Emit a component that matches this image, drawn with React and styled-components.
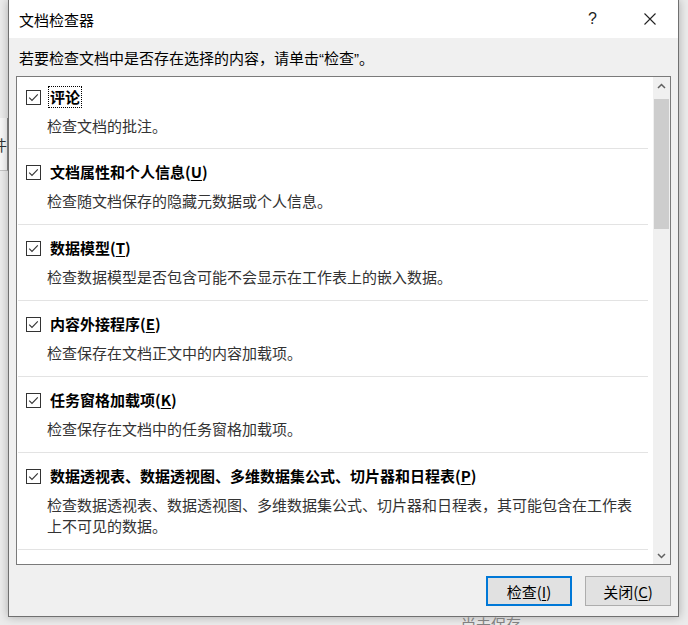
import React from "react";
import styled, { createGlobalStyle } from "styled-components";

const GlobalStyle = createGlobalStyle`
  html, body {
    margin: 0;
    padding: 0;
    background: #e9e9e9;
  }
  body {
    font-family: "Noto Sans CJK SC", "Microsoft YaHei", "Liberation Sans", sans-serif;
  }
`;

const Screen = styled.div`
  width: 688px;
  height: 625px;
  overflow: hidden;
  display: grid;
  grid-template-columns: 8px 671px 1fr;
  grid-template-rows: 617px 8px;
  background: #ebebeb;
`;

const LeftStrip = styled.div`
  grid-column: 1;
  grid-row: 1;
  background: #ececec;
  padding-top: 118px;
`;

const BackTab = styled.div`
  height: 52px;
  display: flex;
  justify-content: flex-end;
  align-items: center;
  overflow: hidden;
  background: #f8f8f8;
  border-right: 1px solid #8a8a8a;
  border-bottom: 1px solid #c4c4c4;
  color: #333;
  font-size: 15px;
  white-space: nowrap;
`;

const BottomStrip = styled.div`
  grid-column: 1 / 4;
  grid-row: 2;
  overflow: hidden;
  padding-left: 461px;
  color: #808080;
  font-size: 15px;
  line-height: 13px;
  white-space: nowrap;
`;

const Dialog = styled.div`
  grid-column: 2;
  grid-row: 1;
  display: flex;
  flex-direction: column;
  background: #f0f0f0;
  border: 1px solid #707070;
  border-top: none;
  box-shadow: 0 0 9px rgba(0, 0, 0, 0.28);
`;

const TitleBar = styled.div`
  height: 38px;
  flex: none;
  display: flex;
  align-items: center;
  background: #ffffff;
  padding: 0 22px 0 10px;
`;

const Title = styled.div`
  flex: 1;
  font-size: 15px;
  color: #000;
`;

const HelpMark = styled.div`
  font-family: "Liberation Sans", sans-serif;
  font-size: 16px;
  color: #222;
  margin-right: 47px;
`;

const CloseMark = styled.svg`
  display: block;
`;

const Body = styled.div`
  flex: 1;
  display: flex;
  flex-direction: column;
  padding: 9px 7px 11px 7px;
  min-height: 0;
`;

const Hint = styled.div`
  font-size: 15px;
  line-height: 22px;
  color: #000;
  padding-left: 3px;
  margin-bottom: 6px;
`;

const Quote = styled.span`
  font-family: "Liberation Sans", sans-serif;
`;

const ListBox = styled.div`
  height: 489px;
  box-sizing: border-box;
  flex: none;
  display: grid;
  grid-template-columns: 1fr 17px;
  background: #ffffff;
  border: 1px solid #7a7a7a;
  overflow: hidden;
`;

const Items = styled.div`
  overflow: hidden;
`;

const Item = styled.div`
  margin: 0 5px 0 1px;
  padding: ${(p) => (p.$first ? "9px 0 12px 8px" : "12px 0 13px 8px")};
  border-bottom: 1px solid #e3e3e3;
  height: ${(p) => (p.$empty ? "40px" : "auto")};
`;

const TitleRow = styled.div`
  display: flex;
  align-items: center;
  height: 22px;
  gap: 9px;
`;

const ItemTitle = styled.span`
  font-size: 15px;
  font-weight: 700;
  line-height: 20px;
  color: #000;
  white-space: nowrap;
  padding: 0 1px;
  margin-left: -1px;
  outline: ${(p) => (p.$focus ? "1px dotted #000" : "none")};
`;

const Key = styled.span`
  text-decoration: underline;
  text-underline-offset: 2px;
`;

const Desc = styled.div`
  margin-top: 7px;
  padding-left: 21px;
  max-width: 590px;
  font-size: 15px;
  line-height: 21px;
  color: #333;
`;

const ScrollBar = styled.div`
  display: flex;
  flex-direction: column;
  background: #f0f0f0;
`;

const ArrowBtn = styled.div`
  height: 17px;
  flex: none;
  display: flex;
  align-items: center;
  justify-content: center;
`;

const Thumb = styled.div`
  margin: 5px 1px 0 1px;
  height: 130px;
  background: #cdcdcd;
`;

const Track = styled.div`
  flex: 1;
`;

const Footer = styled.div`
  display: flex;
  justify-content: flex-end;
  gap: 13px;
  margin-top: 11px;
`;

const Button = styled.button`
  width: 86px;
  height: 30px;
  box-sizing: border-box;
  font-family: inherit;
  font-size: 15px;
  color: #000;
  background: #e1e1e1;
  border: ${(p) => (p.$primary ? "2px solid #0078d7" : "1px solid #adadad")};
  padding: 0;
  cursor: default;
`;

function CheckBox() {
  return (
    <svg width="15" height="15" viewBox="0 0 15 15" style={{ flex: "none" }}>
      <rect x="0.5" y="0.5" width="14" height="14" fill="#fff" stroke="#333" />
      <path d="M3.2 7.6 L6 10.4 L11.8 4.4" fill="none" stroke="#333" strokeWidth="1.1" />
    </svg>
  );
}

function Chevron({ up }) {
  return (
    <svg width="9" height="6" viewBox="0 0 9 6">
      <path
        d={up ? "M1 5 L4.5 1.5 L8 5" : "M1 1 L4.5 4.5 L8 1"}
        fill="none"
        stroke="#606060"
        strokeWidth="1.5"
      />
    </svg>
  );
}

const items = [
  { title: "评论", key: null, desc: "检查文档的批注。" },
  { title: "文档属性和个人信息", key: "U", desc: "检查随文档保存的隐藏元数据或个人信息。" },
  { title: "数据模型", key: "T", desc: "检查数据模型是否包含可能不会显示在工作表上的嵌入数据。" },
  { title: "内容外接程序", key: "E", desc: "检查保存在文档正文中的内容加载项。" },
  { title: "任务窗格加载项", key: "K", desc: "检查保存在文档中的任务窗格加载项。" },
  {
    title: "数据透视表、数据透视图、多维数据集公式、切片器和日程表",
    key: "P",
    desc: "检查数据透视表、数据透视图、多维数据集公式、切片器和日程表，其可能包含在工作表上不可见的数据。",
  },
];

export default function App() {
  return (
    <>
      <GlobalStyle />
      <Screen>
        <LeftStrip>
          <BackTab>文件</BackTab>
        </LeftStrip>
        <Dialog>
          <TitleBar>
            <Title>文档检查器</Title>
            <HelpMark>?</HelpMark>
            <CloseMark width="12" height="12" viewBox="0 0 12 12">
              <path d="M0.5 0.5 L11.5 11.5 M11.5 0.5 L0.5 11.5" stroke="#222" strokeWidth="1.1" />
            </CloseMark>
          </TitleBar>
          <Body>
            <Hint>
              若要检查文档中是否存在选择的内容，请单击<Quote>“</Quote>检查<Quote>”</Quote>。
            </Hint>
            <ListBox>
              <Items>
                {items.map((it, i) => (
                  <Item key={it.title} $first={i === 0}>
                    <TitleRow>
                      <CheckBox />
                      <ItemTitle $focus={i === 0}>
                        {it.title}
                        {it.key && (
                          <>
                            (<Key>{it.key}</Key>)
                          </>
                        )}
                      </ItemTitle>
                    </TitleRow>
                    <Desc>{it.desc}</Desc>
                  </Item>
                ))}
                <Item $empty />
              </Items>
              <ScrollBar>
                <ArrowBtn>
                  <Chevron up />
                </ArrowBtn>
                <Thumb />
                <Track />
                <ArrowBtn>
                  <Chevron />
                </ArrowBtn>
              </ScrollBar>
            </ListBox>
            <Footer>
              <Button $primary>
                检查(<Key>I</Key>)
              </Button>
              <Button>
                关闭(<Key>C</Key>)
              </Button>
            </Footer>
          </Body>
        </Dialog>
        <BottomStrip>尚未保存</BottomStrip>
      </Screen>
    </>
  );
}
